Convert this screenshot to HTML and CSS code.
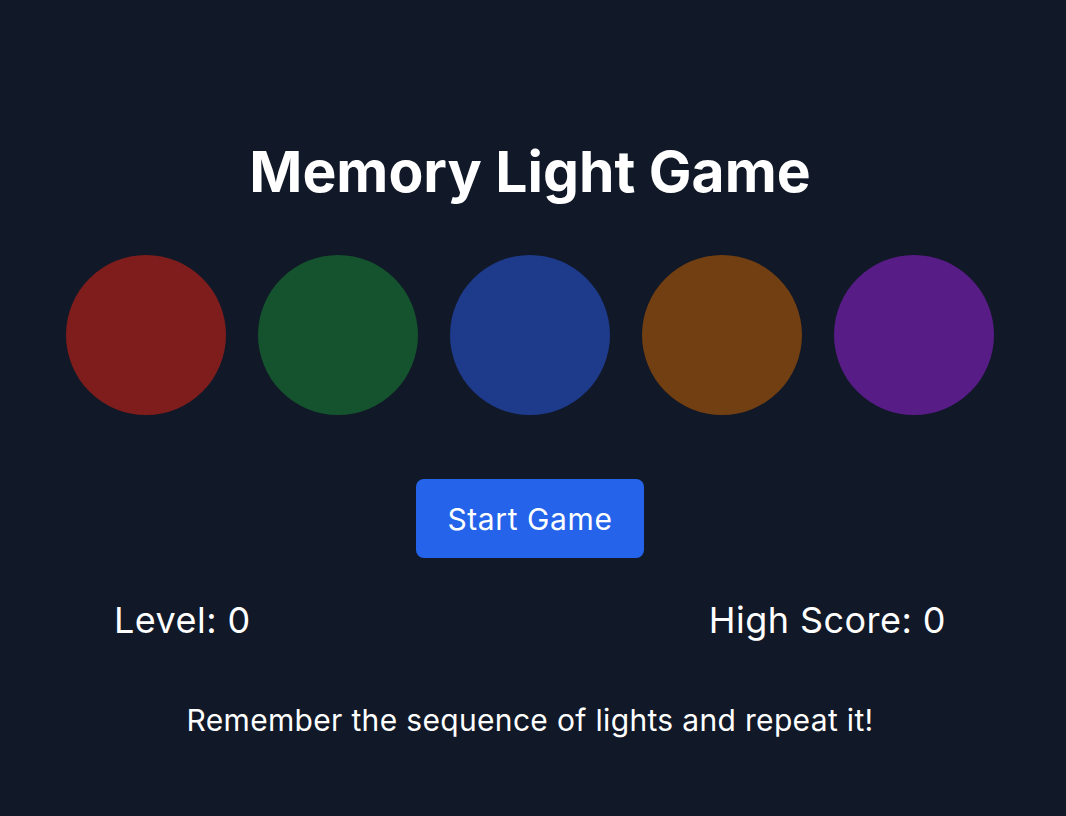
FILE: index.html
```html
<!DOCTYPE html>
<html lang="en">
<head>
  <meta charset="UTF-8">
  <meta name="viewport" content="width=device-width, initial-scale=1.0">
  <title>Memory Light Game</title>
  <link rel="stylesheet" href="styles.css">
</head>
<body>
  <div class="game">
    <h1>Memory Light Game</h1>
    <div class="lights">
      <div class="light red"></div>
      <div class="light green"></div>
      <div class="light blue"></div>
      <div class="light orange"></div>
      <div class="light purple"></div>
    </div>
    <button class="start">Start Game</button>
    <div class="stats">
      <span>Level: 0</span>
      <span>High Score: 0</span>
    </div>
    <p class="hint">Remember the sequence of lights and repeat it!</p>
  </div>
</body>
</html>
```

FILE: styles.css
```css
body {
  margin: 0;
  background-color: #111827;
  color: white;
  font-family: Inter, "Noto Sans", sans-serif;
}
.game {
  width: 1060px;
  display: flex;
  flex-direction: column;
  align-items: center;
  padding-top: 142px;
}
h1 {
  font-size: 57px;
  line-height: 60px;
  font-weight: 700;
  margin: 0 0 53px;
}
.lights {
  display: flex;
  gap: 32px;
}
.light {
  width: 160px;
  height: 160px;
  border-radius: 50%;
}
.red { background-color: #7f1d1d; }
.green { background-color: #14532d; }
.blue { background-color: #1e3a8a; }
.orange { background-color: #713f12; }
.purple { background-color: #581c87; }
.start {
  margin-top: 64px;
  width: 228px;
  height: 79px;
  padding: 0;
  font-family: inherit;
  font-size: 30px;
  letter-spacing: 0.6px;
  color: white;
  background-color: #2563eb;
  border: none;
  border-radius: 8px;
  cursor: pointer;
}
.stats {
  width: 832px;
  margin-top: 42px;
  display: flex;
  justify-content: space-between;
  font-size: 36px;
  line-height: 40px;
  letter-spacing: 0.45px;
}
.hint {
  margin: 62px 0 0;
  font-size: 30px;
  line-height: 36px;
  letter-spacing: 0.33px;
}
```
